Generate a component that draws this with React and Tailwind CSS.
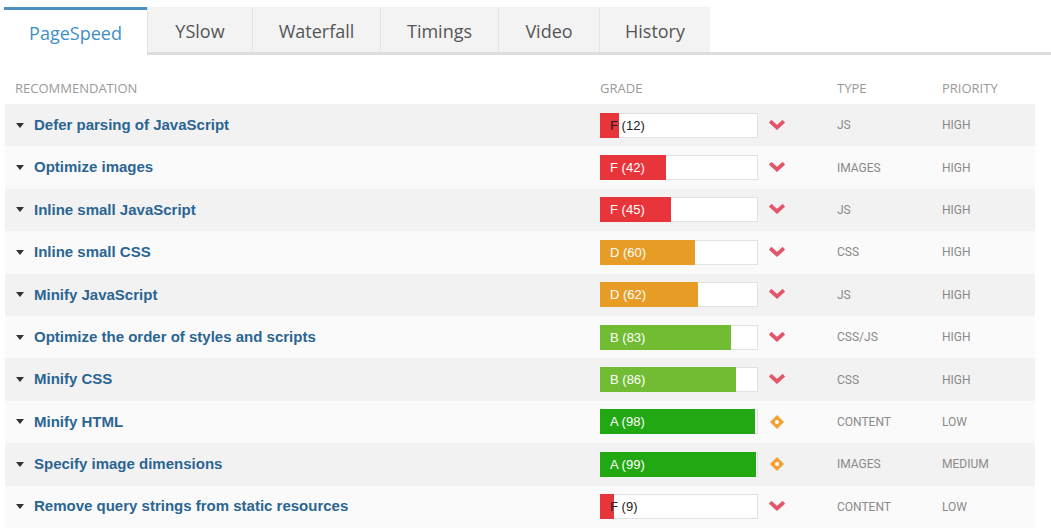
const tabs = [
  { name: "PageSpeed", w: "w-[143px]" },
  { name: "YSlow", w: "w-[105px]" },
  { name: "Waterfall", w: "w-[128px]" },
  { name: "Timings", w: "w-[118px]" },
  { name: "Video", w: "w-[101px]" },
  { name: "History", w: "w-[111px]" }
];

const rows = [
  { name: "Defer parsing of JavaScript", grade: "F", score: 12, type: "JS", priority: "HIGH" },
  { name: "Optimize images", grade: "F", score: 42, type: "IMAGES", priority: "HIGH" },
  { name: "Inline small JavaScript", grade: "F", score: 45, type: "JS", priority: "HIGH" },
  { name: "Inline small CSS", grade: "D", score: 60, type: "CSS", priority: "HIGH" },
  { name: "Minify JavaScript", grade: "D", score: 62, type: "JS", priority: "HIGH" },
  { name: "Optimize the order of styles and scripts", grade: "B", score: 83, type: "CSS/JS", priority: "HIGH" },
  { name: "Minify CSS", grade: "B", score: 86, type: "CSS", priority: "HIGH" },
  { name: "Minify HTML", grade: "A", score: 98, type: "CONTENT", priority: "LOW" },
  { name: "Specify image dimensions", grade: "A", score: 99, type: "IMAGES", priority: "MEDIUM" },
  { name: "Remove query strings from static resources", grade: "F", score: 9, type: "CONTENT", priority: "LOW" }
];

const fills = {
  F: "bg-[#e8353b]",
  D: "bg-[#e79d25]",
  B: "bg-[#72bc33]",
  A: "bg-[#21a812]"
};

function Chevron() {
  return (
    <svg width="16" height="11" viewBox="0 0 16 11">
      <path d="M2.5 2.5 L8 7.5 L13.5 2.5" fill="none" stroke="#e25669" strokeWidth="3.8" strokeLinecap="square" />
    </svg>
  );
}

function Diamond() {
  return (
    <svg width="16" height="16" viewBox="0 0 16 16">
      <path d="M8 1 L15 8 L8 15 L1 8 Z" fill="#f1a236" />
      <circle cx="8" cy="8" r="2" fill="#fff" />
    </svg>
  );
}

function GradeBar({ grade, score }) {
  const dark = score < 20;
  return (
    <div className="relative h-[25px] w-[158px] bg-white border border-[#e2e2e2]">
      <div
        className={`absolute left-[-1px] top-[-1px] bottom-[-1px] ${fills[grade]}`}
        style={{ width: `${(score / 100) * 158}px` }}
      />
      <span
        className={`relative block pl-[9px] leading-[23px] text-[13px] ${dark ? "text-[#222]" : "text-white"}`}
      >
        {grade} ({score})
      </span>
    </div>
  );
}

export default function App() {
  return (
    <div className="w-[1051px] h-[529px] bg-white overflow-hidden font-['Liberation_Sans',Arial,sans-serif]">
      {/* TABS */}
      <div className="flex pt-[7px]">
        <div className="w-[4px] border-b-[3px] border-transparent" />
        {tabs.map((tab, i) =>
          i === 0 ? (
            <div
              key={tab.name}
              className={`${tab.w} h-[48px] bg-white border-t-[3px] border-[#4a90c2] flex items-center justify-center font-['Open_Sans',sans-serif] text-[18px] text-[#3d8fc6] pt-[2px]`}
            >
              {tab.name}
            </div>
          ) : (
            <div
              key={tab.name}
              className={`${tab.w} h-[48px] bg-[#f3f3f3] border-l border-[#e4e4e4] border-b-[3px] border-b-[#dddddd] flex items-center justify-center font-['Open_Sans',sans-serif] text-[18px] text-[#555] pt-[4px]`}
            >
              {tab.name}
            </div>
          )
        )}
        <div className="flex-1 h-[48px] border-b-[3px] border-[#dddddd]" />
      </div>

      {/* TABLE */}
      <div className="ml-[5px] w-[1030px]">
        <div className="grid grid-cols-[595px_237px_105px_1fr] h-[49px] pt-[25px] font-['Open_Sans',sans-serif] text-[13px] leading-[16px] text-[#9a9a9a]">
          <div className="pl-[10px]">RECOMMENDATION</div>
          <div>GRADE</div>
          <div>TYPE</div>
          <div>PRIORITY</div>
        </div>

        {rows.map((row, i) => (
          <div
            key={row.name}
            className={`grid grid-cols-[595px_158px_79px_105px_1fr] items-center h-[42.4px] ${i % 2 === 0 ? "bg-[#f2f2f2]" : "bg-[#fafafa]"}`}
          >
            <div className="flex items-center pl-[11px]">
              <span className="w-0 h-0 border-l-[4px] border-r-[4px] border-t-[5px] border-l-transparent border-r-transparent border-t-[#333]" />
              <span className="ml-[10px] text-[15px] font-bold text-[#2b6592]">{row.name}</span>
            </div>
            <GradeBar grade={row.grade} score={row.score} />
            <div className="flex justify-start pl-[11px]">
              {row.grade === "A" ? <Diamond /> : <Chevron />}
            </div>
            <div className="font-['Roboto',sans-serif] text-[12px] text-[#8a8a8a]">{row.type}</div>
            <div className="font-['Roboto',sans-serif] text-[12px] text-[#8a8a8a]">{row.priority}</div>
          </div>
        ))}
      </div>
    </div>
  );
}
